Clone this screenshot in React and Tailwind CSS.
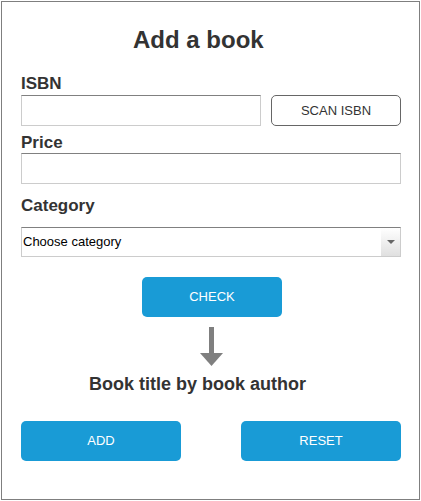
export default function App() {
  return (
    <div className="w-[421px] h-[501px] bg-white pt-px pl-px font-['Liberation_Sans',Arial,sans-serif]">
      <div className="w-[419px] h-[499px] border border-[#7f7f7f] pl-[19px]">
        {/* Title */}
        <h1 className="mt-[27px] pl-[112px] text-[24px] leading-[22px] font-bold text-[#333]">Add a book</h1>

        {/* ISBN */}
        <label className="block mt-[24px] text-[17px] leading-[17px] font-bold text-[#333]">ISBN</label>
        <div className="flex mt-[3px] gap-[10px]">
          <input className="w-[240px] h-[31px] border border-[#ccc] border-t-[#808080] outline-none" />
          <button className="w-[130px] h-[31px] rounded-[5px] border border-[#666] text-[13px] text-[#333] bg-white">
            SCAN ISBN
          </button>
        </div>

        {/* Price */}
        <label className="block mt-[8px] text-[17px] leading-[17px] font-bold text-[#333]">Price</label>
        <input className="block mt-[2px] w-[380px] h-[31px] border border-[#ccc] border-t-[#808080] outline-none" />

        {/* Category */}
        <label className="block mt-[13px] text-[17px] leading-[17px] font-bold text-[#333]">Category</label>
        <div className="flex mt-[13px] w-[380px] h-[30px] border border-[#ccc] border-t-[#808080]">
          <div className="flex-1 flex items-center pl-[1px] text-[13px] text-black">Choose category</div>
          <div className="w-[19px] flex items-center justify-center bg-gradient-to-b from-white to-[#e0e0e0]">
            <svg width="8" height="4" viewBox="0 0 8 4">
              <path d="M0 0 L8 0 L4 4 Z" fill="#666" />
            </svg>
          </div>
        </div>

        {/* Check */}
        <div className="mt-[20px] pl-[121px]">
          <button className="w-[140px] h-[40px] rounded-[5px] bg-[#199bd6] text-white text-[13px]">CHECK</button>
        </div>

        {/* Arrow */}
        <div className="mt-[10px] pl-[179px]">
          <svg width="23" height="39" viewBox="0 0 23 39">
            <rect x="9" y="0" width="5" height="27" fill="#7f7f7f" />
            <path d="M0 26 L23 26 L11.5 39 Z" fill="#7f7f7f" />
          </svg>
        </div>

        {/* Result */}
        <p className="mt-[9px] pl-[68px] text-[18px] leading-[18px] font-bold text-[#333]">Book title by book author</p>

        {/* Actions */}
        <div className="flex mt-[28px] gap-[60px]">
          <button className="w-[160px] h-[40px] rounded-[5px] bg-[#199bd6] text-white text-[13px]">ADD</button>
          <button className="w-[160px] h-[40px] rounded-[5px] bg-[#199bd6] text-white text-[13px]">RESET</button>
        </div>
      </div>
    </div>
  );
}
